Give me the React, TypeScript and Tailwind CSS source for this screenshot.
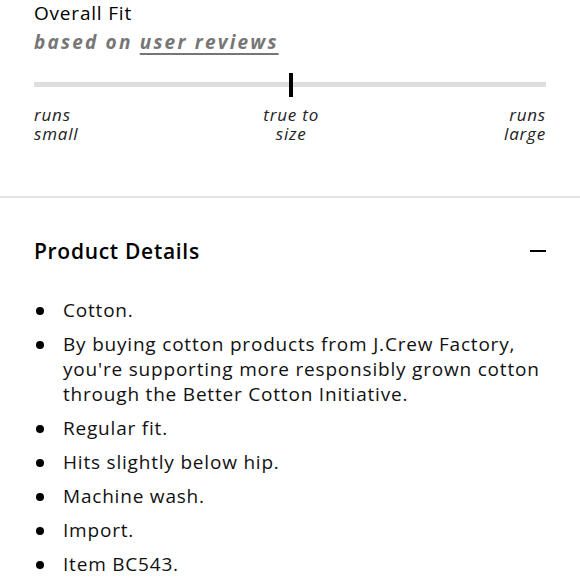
import React from "react";

const items = [
  "Cotton.",
  "By buying cotton products from J.Crew Factory, you're supporting more responsibly grown cotton through the Better Cotton Initiative.",
  "Regular fit.",
  "Hits slightly below hip.",
  "Machine wash.",
  "Import.",
  "Item BC543.",
];

export default function App() {
  return (
    <div className="w-[580px] h-[580px] overflow-hidden bg-white text-black font-['Open_Sans',sans-serif]">
      <div className="px-[34px]">
        <div className="text-[19px] leading-[26px] tracking-[0.8px]">Overall Fit</div>
        <div className="text-[19px] leading-[32px] italic font-bold text-[#767676] tracking-[2.2px]">
          based on <span className="underline underline-offset-[4px] decoration-[2px]">user reviews</span>
        </div>
        <div className="relative mt-[15px] h-[24px] w-[512px]">
          <div className="absolute left-0 right-0 top-[9px] h-[5px] bg-[#dedede]" />
          <div className="absolute left-[255px] top-0 h-[24px] w-[4px] bg-black" />
        </div>
        <div className="mt-[8px] flex justify-between text-[17px] leading-[19px] italic tracking-[0.8px] text-[#222] w-[512px]">
          <div>runs<br />small</div>
          <div className="text-center">true to<br />size</div>
          <div className="text-right">runs<br />large</div>
        </div>
      </div>
      <div className="mt-[53px] h-[2px] bg-[#e3e3e3]" />
      <div className="px-[34px]">
        <div className="mt-[39px] flex items-center justify-between">
          <div className="text-[21px] leading-[28px] font-semibold tracking-[0.7px]">Product Details</div>
          <div className="w-[16px] h-[2px] bg-black" />
        </div>
        <ul className="mt-[33px] flex flex-col gap-[9px] text-[19px] leading-[25px] tracking-[0.8px] text-[#111]">
          {items.map((t) => (
            <li key={t} className="flex">
              <span className="w-[29px] shrink-0 flex pt-[9px] pl-[2px]">
                <span className="w-[8px] h-[8px] rounded-full bg-black" />
              </span>
              <span className="max-w-[484px]">{t}</span>
            </li>
          ))}
        </ul>
      </div>
    </div>
  );
}
